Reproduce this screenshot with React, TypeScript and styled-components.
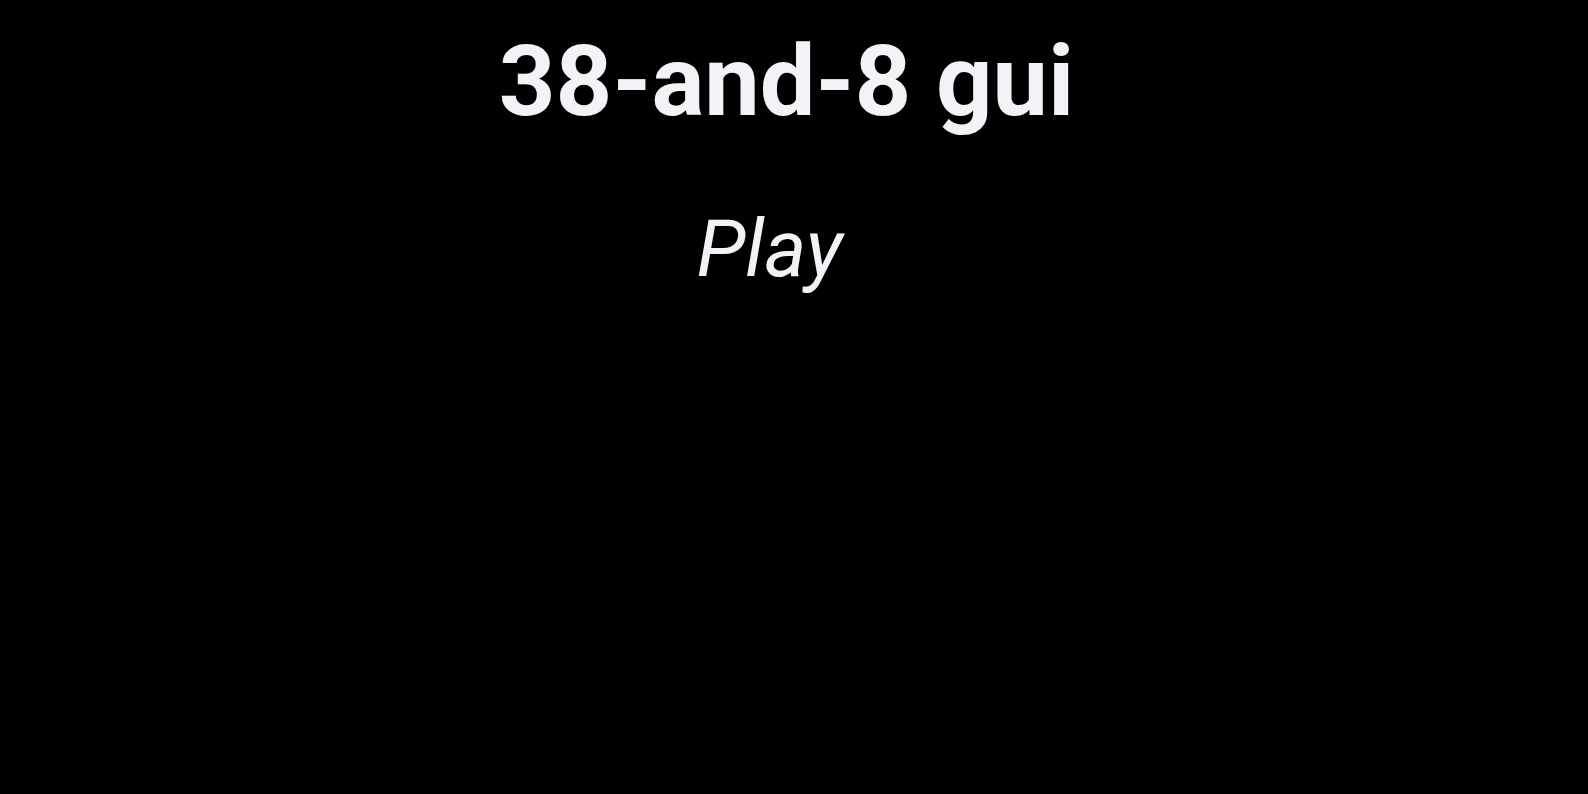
import React from "react";
import styled, { createGlobalStyle } from "styled-components";

const Global = createGlobalStyle`
  html, body { margin: 0; padding: 0; background: #000; }
  body { font-family: Roboto, "Noto Sans", sans-serif; color: #f2f2f7; }
`;

const Page = styled.main`
  min-height: 794px;
  box-sizing: border-box;
  padding-right: 15px;
  display: flex;
  flex-direction: column;
  align-items: center;
  background: #000;
`;

const Title = styled.h1`
  margin: 22px 0 0;
  font-size: 99px;
  font-weight: 700;
  line-height: 1.2;
  color: #f2f2f7;
`;

const Menu = styled.nav`
  display: flex;
  flex-direction: column;
  align-items: center;
  margin-top: 60px;
`;

const MenuItem = styled.a`
  padding-right: 34px;
  font-size: 80px;
  font-style: italic;
  font-weight: 400;
  color: #f2f2f7;
  line-height: 1.2;
  cursor: pointer;
  text-decoration: none;
`;

export default function App() {
  return (
    <>
      <Global />
      <Page>
        <Title>38-and-8 gui</Title>
        <Menu>
          <MenuItem>Play</MenuItem>
        </Menu>
      </Page>
    </>
  );
}
